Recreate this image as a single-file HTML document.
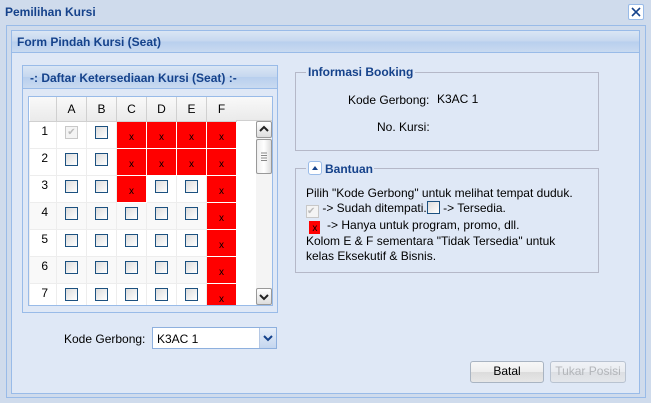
<!DOCTYPE html>
<html><head><style>
*{margin:0;padding:0;box-sizing:border-box}
body{width:651px;height:403px;overflow:hidden;background:#cfdbec;font-family:"Liberation Sans",sans-serif;font-size:12px;color:#000;position:relative}
.a{position:absolute}
.b{font-weight:bold;color:#15428b}
table{border-collapse:collapse;table-layout:fixed}
td{border:1px solid #ededed;height:27px;text-align:center;vertical-align:middle;padding:0 0 5px 0}
th{height:24px;border-right:1px solid #d0d0d0;border-bottom:1px solid #d0d0d0;background:linear-gradient(#f9f9f9,#eaeaea);font-weight:normal;font-size:12px}
.cb{display:inline-block;width:13px;height:13px;border:1px solid #1c5180;background:linear-gradient(135deg,#dcdcdc,#fff);vertical-align:middle}
.ck{display:inline-block;width:13px;height:13px;border:1px solid #c8c8c8;background:#f4f4f4;color:#bbb;font-size:10px;line-height:11px;vertical-align:middle}
td.r{background:#f00;border:1px solid #fff;font-size:10px;padding:6px 0 0 0}
tr.g td{background:#f9f9f9}
tr.g td.r{background:#f00}
td.n{text-align:right;padding-right:8px;padding-bottom:7px}
.fs{border:1px solid #b5b8c8}
.btn{border:1px solid #a9b4c2;border-radius:3px;background:linear-gradient(#f7f7f7 0,#eee 50%,#dcdcdc 51%,#e6e6e6);text-align:center;line-height:19px}
</style></head><body>
<div class="a b" style="left:5px;top:5px;font-size:12px">Pemilihan Kursi</div>
<div class="a" style="left:628px;top:4px;width:16px;height:16px;border:1px solid #99bbe8;border-radius:2px;background:#fff"><svg width="14" height="14" viewBox="0 0 14 14"><path d="M3 3L11 11M11 3L3 11" stroke="#15428b" stroke-width="1.6"/></svg></div>
<div class="a" style="left:6px;top:25px;width:640px;height:373px;border:1px solid #99bbe8;background:#cfdbec"></div>
<div class="a" style="left:11px;top:30px;width:629px;height:364px;border:1px solid #99bbe8;background:#dfe8f6"></div>
<div class="a" style="left:12px;top:31px;width:627px;height:22px;background:linear-gradient(#dae6f4,#c5d7ef 50%,#b8cfee 51%,#c9daf0);border-bottom:1px solid #99bbe8"></div>
<div class="a b" style="left:17px;top:35px">Form Pindah Kursi (Seat)</div>

<div class="a" style="left:22px;top:65px;width:256px;height:248px;border:1px solid #99bbe8;background:#dfe8f6"></div>
<div class="a" style="left:23px;top:66px;width:254px;height:23px;background:linear-gradient(#dae6f4,#c5d7ef 50%,#b8cfee 51%,#c9daf0);border-bottom:1px solid #99bbe8"></div>
<div class="a b" style="left:30px;top:71px">-: Daftar Ketersediaan Kursi (Seat) :-</div>
<div class="a" style="left:28px;top:96px;width:245px;height:210px;border:1px solid #99bbe8;background:#fff;overflow:hidden">
<table style="width:207px">
<colgroup><col style="width:27px"><col style="width:30px"><col style="width:30px"><col style="width:30px"><col style="width:30px"><col style="width:30px"><col style="width:30px"></colgroup>
<tr><th></th><th>A</th><th>B</th><th>C</th><th>D</th><th>E</th><th>F</th></tr>
<tr><td class="n">1</td><td><span class="ck">✔</span></td><td><span class="cb"></span></td><td class="r">x</td><td class="r">x</td><td class="r">x</td><td class="r">x</td></tr>
<tr><td class="n">2</td><td><span class="cb"></span></td><td><span class="cb"></span></td><td class="r">x</td><td class="r">x</td><td class="r">x</td><td class="r">x</td></tr>
<tr><td class="n">3</td><td><span class="cb"></span></td><td><span class="cb"></span></td><td class="r">x</td><td><span class="cb"></span></td><td><span class="cb"></span></td><td class="r">x</td></tr>
<tr class="g"><td class="n">4</td><td><span class="cb"></span></td><td><span class="cb"></span></td><td><span class="cb"></span></td><td><span class="cb"></span></td><td><span class="cb"></span></td><td class="r">x</td></tr>
<tr><td class="n">5</td><td><span class="cb"></span></td><td><span class="cb"></span></td><td><span class="cb"></span></td><td><span class="cb"></span></td><td><span class="cb"></span></td><td class="r">x</td></tr>
<tr class="g"><td class="n">6</td><td><span class="cb"></span></td><td><span class="cb"></span></td><td><span class="cb"></span></td><td><span class="cb"></span></td><td><span class="cb"></span></td><td class="r">x</td></tr>
<tr><td class="n">7</td><td><span class="cb"></span></td><td><span class="cb"></span></td><td><span class="cb"></span></td><td><span class="cb"></span></td><td><span class="cb"></span></td><td class="r">x</td></tr>
</table>
<div class="a" style="left:207px;top:0;width:38px;height:24px;background:linear-gradient(#f9f9f9,#eaeaea);border-bottom:1px solid #d0d0d0"></div>
<div class="a" style="left:227px;top:24px;width:17px;height:185px;background:#f4f4f4"></div>
<div class="a" style="left:227px;top:24px;width:16px;height:17px;border:1px solid #999;border-radius:2px;background:linear-gradient(#fff,#ddd)"><svg width="14" height="15" viewBox="0 0 14 15"><path d="M3 9L7 5L11 9" fill="none" stroke="#222" stroke-width="2"/></svg></div>
<div class="a" style="left:227px;top:42px;width:16px;height:35px;border:1px solid #999;border-radius:2px;background:linear-gradient(90deg,#eee,#fff,#ddd)"><svg width="14" height="33" viewBox="0 0 14 33"><path d="M4 13H10M4 15.5H10M4 18H10M4 20.5H10" stroke="#888" stroke-width="1"/></svg></div>
<div class="a" style="left:227px;top:191px;width:16px;height:17px;border:1px solid #999;border-radius:2px;background:linear-gradient(#fff,#ddd)"><svg width="14" height="15" viewBox="0 0 14 15"><path d="M3 6L7 10L11 6" fill="none" stroke="#222" stroke-width="2"/></svg></div>
</div>

<div class="a" style="left:64px;top:332px">Kode Gerbong:</div>
<div class="a" style="left:152px;top:327px;width:125px;height:22px;border:1px solid #8eb0de;background:#fff"></div>
<div class="a" style="left:157px;top:332px">K3AC 1</div>
<div class="a" style="left:259px;top:328px;width:17px;height:20px;background:linear-gradient(#e6eef9,#c4d6ef);border-left:1px solid #b5c8e4"><svg width="16" height="20" viewBox="0 0 16 20"><path d="M4 8L8 12L12 8" fill="none" stroke="#15428b" stroke-width="2"/></svg></div>

<div class="a fs" style="left:295px;top:72px;width:304px;height:79px"></div>
<div class="a b" style="left:306px;top:65px;background:#dfe8f6;padding:0 2px">Informasi Booking</div>
<div class="a" style="left:348px;top:93px">Kode Gerbong:</div>
<div class="a" style="left:437px;top:92px">K3AC 1</div>
<div class="a" style="left:377px;top:120px">No. Kursi:</div>

<div class="a fs" style="left:295px;top:168px;width:304px;height:105px"></div>
<div class="a" style="left:306px;top:161px;background:#dfe8f6;width:68px;height:16px"></div>
<div class="a" style="left:308px;top:161px;width:14px;height:14px;border:1px solid #99bbe8;border-radius:3px;background:#fff"><svg width="12" height="12" viewBox="0 0 12 12"><path d="M3 8L6 4L9 8Z" fill="#15428b"/></svg></div>
<div class="a b" style="left:325px;top:162px">Bantuan</div>
<div class="a" style="left:306px;top:186px;line-height:15px">Pilih "Kode Gerbong" untuk melihat tempat duduk.<br>
<span class="ck" style="vertical-align:-2px">✔</span> -&gt; Sudah ditempati.<span class="cb" style="vertical-align:-2px"></span> -&gt; Tersedia.<br>
&nbsp;<span style="display:inline-block;width:11px;height:13px;background:#f00;font-size:10px;text-align:center;vertical-align:-2px">x</span>&nbsp; -&gt; Hanya untuk program, promo, dll.<br>
Kolom E &amp; F sementara "Tidak Tersedia" untuk<br>kelas Eksekutif &amp; Bisnis.</div>

<div class="a btn" style="left:470px;top:361px;width:74px;height:22px">Batal</div>
<div class="a btn" style="left:550px;top:361px;width:76px;height:22px;color:#a0a0a0;opacity:.7">Tukar Posisi</div>
</body></html>
